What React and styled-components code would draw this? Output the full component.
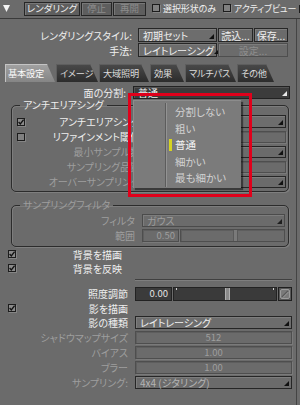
import React from 'react'
import styled, { createGlobalStyle } from 'styled-components'

const GlobalStyle = createGlobalStyle`
  html, body {
    margin: 0;
    padding: 0;
    background: #6b6b6b;
  }
  body {
    font-family: "Noto Sans CJK JP", "Noto Sans", sans-serif;
  }
`

const TEXT = '#efefef'
const DIM = '#9e9e9e'

const Window = styled.div`
  width: 300px;
  height: 405px;
  overflow: hidden;
  background: #6b6b6b;
  color: ${TEXT};
  font-size: 10px;
  line-height: 1.1;
  font-feature-settings: "palt" 1;
  display: flex;
  flex-direction: column;
  white-space: nowrap;
`

const TopBar = styled.div`
  height: 19px;
  box-sizing: border-box;
  border-bottom: 1px solid #3a3a3a;
  display: flex;
  align-items: center;
  padding: 0 0 1px 3px;
`

const Collapse = styled.svg`
  width: 7px;
  height: 7px;
  margin-right: 14px;
  flex: none;
`

const ToolButton = styled.div`
  width: ${p => p.$w}px;
  height: 14px;
  flex: none;
  box-sizing: border-box;
  border: 1px solid #262626;
  background: #5e5e5e;
  box-shadow: inset 1px 1px 0 #787878;
  color: ${p => (p.$disabled ? '#8c8c8c' : TEXT)};
  font-size: 9.5px;
  display: flex;
  align-items: center;
  justify-content: center;
  & + & {
    margin-left: 1px;
  }
`

const TopCheck = styled.label`
  display: flex;
  align-items: center;
  gap: 3px;
  margin-left: ${p => p.$ml}px;
  font-size: 9px;
  letter-spacing: -0.1px;
  flex: none;
`

const Box = styled.span`
  width: 8px;
  height: 8px;
  box-sizing: border-box;
  flex: none;
  border: 1px solid #1c1c1c;
  background: ${p => (p.$checked ? '#8a8a8a' : '#808080')};
  box-shadow: 1px 1px 0 rgba(255, 255, 255, 0.18);
  display: flex;
  align-items: center;
  justify-content: center;
`

const Body = styled.div`
  flex: 1;
  width: 297px;
  box-sizing: border-box;
  border-right: 1px solid #444;
  display: flex;
  flex-direction: column;
`

const Head = styled.div`
  padding: 9px 8px 0 0;
  display: flex;
  flex-direction: column;
  gap: 1px;
`

const Row = styled.div`
  display: grid;
  grid-template-columns: ${p => p.$cols};
  column-gap: ${p => p.$gap ?? 6}px;
  height: ${p => p.$h}px;
  align-items: center;
  padding: ${p => p.$pad || '0'};
  margin-top: ${p => p.$mt || 0}px;
`

const Label = styled.span`
  text-align: right;
  color: ${p => (p.$disabled ? DIM : TEXT)};
  padding-right: ${p => p.$pr || 0}px;
`

const Combo = styled.div`
  display: flex;
  gap: 1px;
  height: ${p => p.$h}px;
`

const TONES = {
  normal: { bg: '#6d6d6d', border: '#262626', color: TEXT, caret: '#111' },
  dark: { bg: '#3c3c3c', border: '#222', color: TEXT, caret: '#e8e8e8' },
  off: { bg: '#6b6b6b', border: '#4b4b4b', color: DIM, caret: '#1e1e1e' },
  offDark: { bg: '#6b6b6b', border: '#262626', color: '#b4b4b4', caret: '#111' },
}

const Select = styled.div`
  height: ${p => p.$h}px;
  width: ${p => (p.$w ? `${p.$w}px` : 'auto')};
  flex: ${p => (p.$w ? 'none' : 1)};
  box-sizing: border-box;
  border: 1px solid ${p => TONES[p.$tone].border};
  background: ${p => TONES[p.$tone].bg};
  box-shadow: inset 1px 1px 0 rgba(255, 255, 255, 0.12);
  color: ${p => TONES[p.$tone].color};
  display: flex;
  align-items: center;
  padding-left: 4px;
`

const Caret = styled.svg`
  width: 5px;
  height: 5px;
  flex: none;
  align-self: flex-end;
  margin: 0 2px 2px auto;
`

const Button = styled.div`
  height: ${p => p.$h}px;
  width: ${p => p.$w}px;
  flex: none;
  box-sizing: border-box;
  border: 1px solid ${p => (p.$disabled ? '#4e4e4e' : '#262626')};
  background: #6b6b6b;
  box-shadow: inset 1px 1px 0 rgba(255, 255, 255, 0.12);
  color: ${p => (p.$disabled ? '#8e8e8e' : TEXT)};
  display: flex;
  align-items: center;
  justify-content: center;
`

const Field = styled.div`
  height: ${p => p.$h}px;
  width: ${p => (p.$w ? `${p.$w}px` : 'auto')};
  flex: ${p => (p.$w ? 'none' : 1)};
  box-sizing: border-box;
  border: 1px solid ${p => (p.$dark ? '#222' : '#4e4e4e')};
  background: ${p => (p.$dark ? '#3b3b3b' : '#6b6b6b')};
  box-shadow: ${p => (p.$dark ? 'none' : 'inset 1px 1px 0 rgba(0,0,0,0.12), 1px 1px 0 rgba(255,255,255,0.1)')};
  color: ${p => (p.$dark ? '#e4e4e4' : DIM)};
  display: flex;
  align-items: center;
  justify-content: ${p => (p.$align === 'right' ? 'flex-end' : 'center')};
  padding-right: ${p => (p.$align === 'right' ? 3 : 0)}px;
  font-size: 9.5px;
`

const Track = styled.div`
  flex: 1;
  box-sizing: border-box;
  display: flex;
  border: 1px solid ${p => (p.$dark ? '#222' : '#4e4e4e')};
  background: ${p =>
    p.$dark
      ? 'linear-gradient(#d0d0d0,#d0d0d0) 2px 0 / 1px 2px no-repeat, linear-gradient(#d0d0d0,#d0d0d0) calc(100% - 2px) 0 / 1px 2px no-repeat, #3a3a3a'
      : '#6b6b6b'};
  box-shadow: ${p => (p.$dark ? 'none' : 'inset 1px 1px 0 rgba(0,0,0,0.12)')};
`

const TrackFill = styled.span`
  flex: none;
`

const Thumb = styled.span`
  width: 3px;
  flex: none;
  background: ${p => (p.$dark ? '#8a8a8a' : '#7a7a7a')};
  border-left: 1px solid ${p => (p.$dark ? '#b0b0b0' : '#5a5a5a')};
  border-right: 1px solid ${p => (p.$dark ? '#b0b0b0' : '#5a5a5a')};
`

const ResetButton = styled.div`
  width: 14px;
  flex: none;
  box-sizing: border-box;
  border: 1px solid #1f1f1f;
  background: #575757;
  display: flex;
  align-items: center;
  justify-content: center;
`

const TabBar = styled.div`
  display: flex;
  gap: 1px;
  padding-left: 5px;
  margin-top: 7px;
  height: 18px;
`

const Tab = styled.div`
  width: ${p => p.$w}px;
  height: 18px;
  box-sizing: border-box;
  padding: 1px 0 0 ${p => p.$pl || 4}px;
  clip-path: polygon(0 0, calc(100% - 8px) 0, 100% 100%, 0 100%);
  background: ${p => (p.$active ? 'linear-gradient(#a2a2a2, #858585)' : 'linear-gradient(#4a4a4a, #2c2c2c)')};
  box-shadow: inset 1px 1px 0 ${p => (p.$active ? '#c4c4c4' : '#5e5e5e')};
  color: ${p => (p.$active ? '#fafafa' : '#dcdcdc')};
  font-size: 9.2px;
  letter-spacing: -0.2px;
  display: flex;
  align-items: center;
`

const Content = styled.div`
  position: relative;
  flex: 1;
  display: flex;
  flex-direction: column;
`

const Group = styled.fieldset`
  margin: ${p => p.$mt}px 7px 0 11px;
  padding: ${p => p.$pt}px ${p => p.$pr}px ${p => p.$pb}px 5px;
  border: 1px solid #2c2c2c;
  border-radius: 5px;
  box-shadow: 1px 1px 0 rgba(255, 255, 255, 0.14), inset 1px 1px 0 rgba(255, 255, 255, 0.12);
  min-width: 0;
`

const Legend = styled.legend`
  padding: 0 3px;
  margin-left: 3px;
  height: 10px;
  line-height: 10px;
  color: ${p => (p.$disabled ? DIM : TEXT)};
`

const Divider = styled.div`
  margin: 4px 4px 0 135px;
  height: 1px;
  background: #404040;
  border-bottom: 1px solid #7e7e7e;
`

const Popup = styled.div`
  position: absolute;
  left: 133px;
  top: 18px;
  width: 108px;
  height: 88px;
  box-sizing: border-box;
  background: #7b7b7b;
  border-top: 1px solid #8c8c8c;
  border-left: 1px solid #8c8c8c;
  box-shadow: 2px 2px 1px rgba(0, 0, 0, 0.45);
  display: flex;
`

const Gutter = styled.div`
  width: 31px;
  margin: 2px 0 1px;
  border-right: 1px solid #5c5c5c;
  box-shadow: 1px 0 0 #939393;
`

const MenuList = styled.div`
  flex: 1;
  padding-top: 3px;
  display: flex;
  flex-direction: column;
`

const MenuItem = styled.div`
  height: 16.4px;
  display: flex;
  align-items: center;
  gap: 3px;
  padding-left: 3px;
  font-size: 10.5px;
  color: ${p => (p.$current ? '#f6f6f6' : '#d2d2d2')};
`

const Marker = styled.span`
  width: 3px;
  height: 12px;
  background: ${p => (p.$on ? '#d6d421' : 'transparent')};
`

const Callout = styled.div`
  position: absolute;
  left: 128px;
  top: 11px;
  width: 124px;
  height: 104px;
  box-sizing: border-box;
  border: 3px solid #e1001b;
  pointer-events: none;
`

const CaretIcon = ({ color }) => (
  <Caret viewBox="0 0 5 5">
    <path d="M5 0 L5 5 L0 5 Z" fill={color} />
  </Caret>
)

const Check = ({ checked }) => (
  <Box $checked={checked}>
    {checked && (
      <svg width="6" height="6" viewBox="0 0 6 6">
        <path d="M0.6 3 L2.3 4.9 L5.6 0.6" stroke="#111" strokeWidth="1.3" fill="none" />
      </svg>
    )}
  </Box>
)

const Dropdown = ({ tone = 'normal', h, w, children }) => (
  <Select $tone={tone} $h={h} $w={w}>
    {children}
    <CaretIcon color={TONES[tone].caret} />
  </Select>
)

const Slider = ({ value, dark }) => (
  <Track $dark={dark}>
    <TrackFill style={{ width: `${value}%` }} />
    <Thumb $dark={dark} />
  </Track>
)

const tabs = [
  { name: '基本設定', w: 50, active: true },
  { name: 'イメージ', w: 42 },
  { name: '大域照明', w: 50 },
  { name: '効果', w: 34 },
  { name: 'マルチパス', w: 51 },
  { name: 'その他', w: 37 },
]

const splitOptions = ['分割しない', '粗い', '普通', '細かい', '最も細かい']

const G1 = '8px 1fr 140px'
const G2 = '1fr 143px'
const LOW = '8px 1fr 157px'

export default function App() {
  return (
    <Window>
      <GlobalStyle />
      <TopBar>
        <Collapse viewBox="0 0 7 7">
          <path d="M0 0 L7 0 L3.5 7 Z" fill="#f4f4f4" />
        </Collapse>
        <ToolButton $w={56}>レンダリング</ToolButton>
        <ToolButton $w={31} $disabled>停止</ToolButton>
        <ToolButton $w={33} $disabled>再開</ToolButton>
        <TopCheck $ml={6}><Check />選択形状のみ</TopCheck>
        <TopCheck $ml={7}><Check />アクティブビュー</TopCheck>
        <TopCheck $ml={3}><Check /></TopCheck>
      </TopBar>

      <Body>
        <Head>
          <Row $cols="1fr 150px" $h={14}>
            <Label>レンダリングスタイル:</Label>
            <Combo $h={14}>
              <Dropdown h={14} w={79}>初期セット</Dropdown>
              <Button $h={14} $w={35}>読込...</Button>
              <Button $h={14} $w={34}>保存...</Button>
            </Combo>
          </Row>
          <Row $cols="1fr 150px" $h={14}>
            <Label>手法:</Label>
            <Combo $h={14}>
              <Dropdown h={14} w={79}>レイトレーシング</Dropdown>
              <Button $h={14} $w={70} $disabled>設定...</Button>
            </Combo>
          </Row>
        </Head>

        <TabBar>
          {tabs.map(t => (
            <Tab key={t.name} $w={t.w} $active={t.active} $pl={t.active ? 3 : 4}>
              {t.name}
            </Tab>
          ))}
        </TabBar>

        <Content>
          <Row $cols="1fr 157px" $gap={7} $h={13} $pad="0 6px 0 0" $mt={4}>
            <Label>面の分割:</Label>
            <Dropdown tone="dark" h={13}>普通</Dropdown>
          </Row>

          <Group $mt={1} $pt={4} $pr={2} $pb={2}>
            <Legend>アンチエリアシング</Legend>
            <Row $cols={G1} $h={15}>
              <Check checked />
              <Label>アンチエリアシング</Label>
              <Dropdown h={13} />
            </Row>
            <Row $cols={G1} $h={15}>
              <Check />
              <Label>リファインメント閾値</Label>
              <Field $h={12} />
            </Row>
            <Row $cols={G1} $h={15}>
              <span />
              <Label $disabled>最小サンプル数</Label>
              <Dropdown tone="offDark" h={12} />
            </Row>
            <Row $cols={G1} $h={15}>
              <span />
              <Label $disabled>サンプリング品質</Label>
              <Field $h={12} />
            </Row>
            <Row $cols={G1} $h={15}>
              <span />
              <Label $disabled>オーバーサンプリング</Label>
              <Dropdown tone="offDark" h={12} />
            </Row>
          </Group>

          <Group $mt={8} $pt={3} $pr={3} $pb={3}>
            <Legend $disabled>サンプリングフィルタ</Legend>
            <Row $cols={G2} $gap={7} $h={15}>
              <Label $disabled>フィルタ</Label>
              <Dropdown tone="off" h={13}>ガウス</Dropdown>
            </Row>
            <Row $cols={G2} $gap={7} $h={15}>
              <Label $disabled>範囲</Label>
              <Combo $h={13}>
                <Field $h={13} $w={37} $align="right">0.50</Field>
                <Slider value={50} />
              </Combo>
            </Row>
          </Group>

          <Row $cols={LOW} $gap={7} $h={14} $pad="0 4px 0 8px">
            <Check checked />
            <Label $pr={6}>背景を描画</Label>
          </Row>
          <Row $cols={LOW} $gap={7} $h={14} $pad="0 4px 0 8px">
            <Check checked />
            <Label $pr={6}>背景を反映</Label>
          </Row>

          <Divider />

          <Row $cols={LOW} $gap={7} $h={15} $pad="0 4px 0 8px" $mt={5}>
            <span />
            <Label>照度調節</Label>
            <Combo $h={14}>
              <Field $h={14} $w={37} $dark $align="right">0.00</Field>
              <Slider value={50} dark />
              <ResetButton>
                <svg width="10" height="10" viewBox="0 0 10 10">
                  <rect x="0.5" y="0.5" width="9" height="9" rx="1.5" fill="#7a7a7a" stroke="#9c9c9c" />
                  <path d="M2 8 L8 2" stroke="#5a5a5a" strokeWidth="1.6" />
                  <path d="M2.8 8.6 L8.6 2.8" stroke="#a8a8a8" strokeWidth="0.8" />
                </svg>
              </ResetButton>
            </Combo>
          </Row>
          <Row $cols={LOW} $gap={7} $h={14} $pad="0 4px 0 8px">
            <Check checked />
            <Label>影を描画</Label>
          </Row>
          <Row $cols={LOW} $gap={7} $h={15} $pad="0 4px 0 8px">
            <span />
            <Label>影の種類</Label>
            <Dropdown h={13}>レイトレーシング</Dropdown>
          </Row>
          <Row $cols={LOW} $gap={7} $h={15} $pad="0 4px 0 8px">
            <span />
            <Label $disabled>シャドウマップサイズ</Label>
            <Field $h={13}>512</Field>
          </Row>
          <Row $cols={LOW} $gap={7} $h={15} $pad="0 4px 0 8px">
            <span />
            <Label $disabled>バイアス</Label>
            <Field $h={13}>1.00</Field>
          </Row>
          <Row $cols={LOW} $gap={7} $h={15} $pad="0 4px 0 8px">
            <span />
            <Label $disabled>ブラー</Label>
            <Field $h={13}>1.00</Field>
          </Row>
          <Row $cols={LOW} $gap={7} $h={15} $pad="0 4px 0 8px">
            <span />
            <Label $disabled>サンプリング:</Label>
            <Dropdown tone="offDark" h={13}>4x4 (ジタリング)</Dropdown>
          </Row>

          <Popup>
            <Gutter />
            <MenuList>
              {splitOptions.map(o => (
                <MenuItem key={o} $current={o === '普通'}>
                  <Marker $on={o === '普通'} />
                  {o}
                </MenuItem>
              ))}
            </MenuList>
          </Popup>
          <Callout />
        </Content>
      </Body>
    </Window>
  )
}
